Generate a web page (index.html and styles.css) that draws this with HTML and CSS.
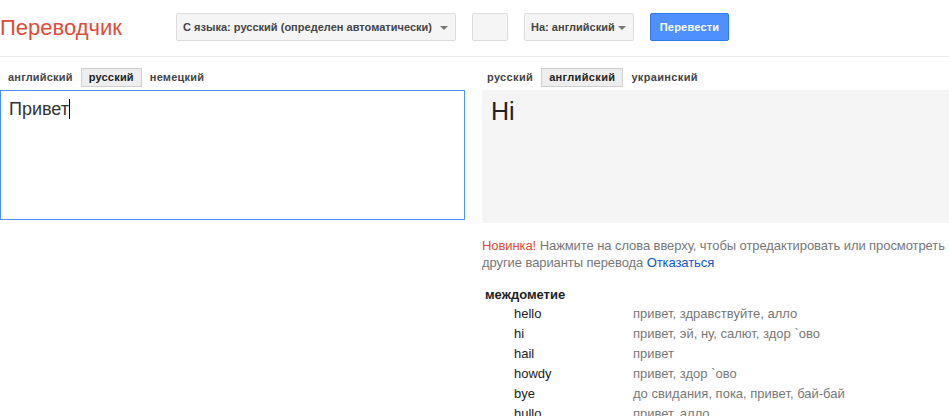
FILE: index.html
```html
<!DOCTYPE html>
<html lang="ru">
<head>
<meta charset="utf-8">
<title>Переводчик</title>
<link rel="stylesheet" href="styles.css">
</head>
<body>
<header class="header">
  <div class="logo">Переводчик</div>
  <div class="controls">
    <div class="dropdown dropdown-src"><span>С языка: русский (определен автоматически)</span><i class="arrow"></i></div>
    <div class="swap"></div>
    <div class="dropdown dropdown-dst"><span>На: английский</span><i class="arrow"></i></div>
    <div class="btn-translate">Перевести</div>
  </div>
</header>
<main class="main">
  <section class="col col-left">
    <div class="tabs">
      <span class="tab">английский</span>
      <span class="tab tab-active">русский</span>
      <span class="tab">немецкий</span>
    </div>
    <div class="source">Привет<span class="caret"></span></div>
  </section>
  <section class="col col-right">
    <div class="tabs tabs-right">
      <span class="tab">русский</span>
      <span class="tab tab-active">английский</span>
      <span class="tab">украинский</span>
    </div>
    <div class="result">Hi</div>
    <p class="notice"><span class="new">Новинка!</span> Нажмите на слова вверху, чтобы отредактировать или просмотреть другие варианты перевода <a class="optout" href="#">Отказаться</a></p>
    <div class="dict">
      <div class="pos">междометие</div>
      <div class="row"><span class="word">hello</span><span class="trans">привет, здравствуйте, алло</span></div>
      <div class="row"><span class="word">hi</span><span class="trans">привет, эй, ну, салют, здор `ово</span></div>
      <div class="row"><span class="word">hail</span><span class="trans">привет</span></div>
      <div class="row"><span class="word">howdy</span><span class="trans">привет, здор `ово</span></div>
      <div class="row"><span class="word">bye</span><span class="trans">до свидания, пока, привет, бай-бай</span></div>
      <div class="row"><span class="word">hullo</span><span class="trans">привет, алло</span></div>
    </div>
  </section>
</main>
</body>
</html>
```
FILE: styles.css
```css
html, body {
  margin: 0;
  padding: 0;
  background: #fff;
  font-family: "Liberation Sans", Arial, sans-serif;
  overflow: hidden;
}
.header {
  display: flex;
  align-items: flex-start;
  height: 56px;
  border-bottom: 1px solid #ebebeb;
  box-sizing: content-box;
}
.logo {
  width: 176px;
  color: #dd4b39;
  font-size: 22px;
  line-height: 26px;
  padding-top: 15px;
}
.controls {
  display: flex;
  gap: 16px;
  padding-top: 13px;
}
.dropdown, .swap, .btn-translate {
  height: 28px;
  box-sizing: border-box;
  border: 1px solid #dcdcdc;
  background: #f5f5f5;
  border-radius: 2px;
  flex: none;
}
.dropdown {
  display: flex;
  align-items: center;
  justify-content: space-between;
  padding: 0 7px 0 6px;
  font-size: 11px;
  font-weight: bold;
  color: #444;
  letter-spacing: 0.02px;
  white-space: nowrap;
}
.dropdown span { flex: none; }
.dropdown-src { width: 280px; }
.dropdown-dst { width: 110px; }
.arrow {
  flex: none;
  width: 0;
  height: 0;
  border-left: 4px solid transparent;
  border-right: 4px solid transparent;
  border-top: 4px solid #777;
  margin-top: 2px;
}
.swap { width: 36px; }
.btn-translate {
  width: 79px;
  background: #4d90fe;
  border-color: #3079ed;
  color: #fff;
  font-size: 11px;
  font-weight: bold;
  letter-spacing: 0.2px;
  display: flex;
  align-items: center;
  justify-content: center;
}
.main {
  display: flex;
  gap: 14px;
}
.col-left { width: 465px; flex: none; }
.col-right { flex: 1; min-width: 0; }
.tabs {
  display: flex;
  margin-top: 11px;
  height: 19px;
  margin-bottom: 3px;
}
.tab {
  padding: 0 7px;
  border: 1px solid transparent;
  font-size: 11px;
  font-weight: bold;
  color: #444;
  line-height: 17px;
  letter-spacing: 0.2px;
}
.tabs-right .tab { letter-spacing: 0.35px; }
.tab-active {
  background: #eee;
  border-color: #d0d0d0;
  color: #222;
}
.source {
  height: 130px;
  box-sizing: border-box;
  border: 1px solid #4d90fe;
  padding: 6px 8px;
  font-size: 18px;
  line-height: 24px;
  color: #333;
}
.caret {
  display: inline-block;
  width: 1px;
  height: 20px;
  background: #000;
  vertical-align: -4px;
}
.result {
  margin-left: 3px;
  height: 133px;
  box-sizing: border-box;
  background: #f5f5f5;
  padding: 5px 9px;
  font-size: 25px;
  line-height: 32px;
  color: #222;
}
.notice {
  margin: 14px -12px 0 3px;
  font-size: 13px;
  line-height: 17px;
  color: #777;
  letter-spacing: -0.08px;
}
.new { color: #dd4b39; }
.optout { color: #1155cc; text-decoration: none; }
.dict {
  margin: 15px 0 0 6px;
  font-size: 13px;
  line-height: 20px;
}
.pos {
  font-weight: bold;
  color: #222;
  line-height: 18px;
}
.row {
  display: flex;
  padding-left: 29px;
}
.word {
  width: 119px;
  color: #222;
}
.trans { color: #777; }
```
